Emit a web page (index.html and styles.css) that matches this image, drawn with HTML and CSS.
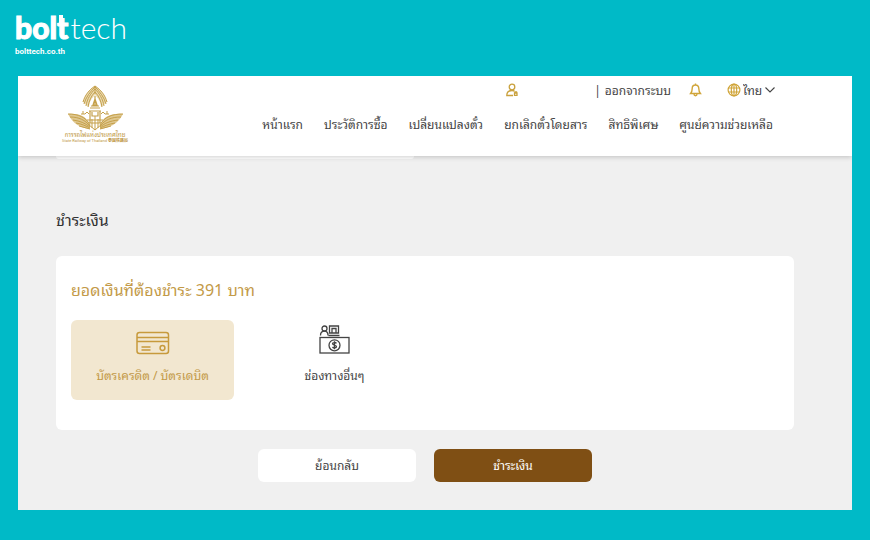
FILE: index.html
```html
<!DOCTYPE html>
<html lang="th">
<head>
<meta charset="utf-8">
<meta name="viewport" content="width=device-width, initial-scale=1">
<title>ชำระเงิน</title>
<link rel="stylesheet" href="styles.css">
</head>
<body>
<header class="brand">
  <div class="brand-name"><span class="brand-bold">bolt</span><span class="brand-light">tech</span></div>
  <a class="brand-url" href="#">bolttech.co.th</a>
</header>
<div class="window">
  <header class="site-header">
    <a class="srt-logo" href="#" aria-label="การรถไฟแห่งประเทศไทย">
      <svg class="srt-emblem" viewBox="0 0 57 46" fill="none" stroke="#c5a04a" stroke-width="1">
        <path d="M28 1C23 4 18 10 16 17l6 5c0-5 3-9 6-12 3 3 6 7 6 12l6-5C38 10 33 4 28 1z" fill="#eadbb5" stroke="none"/>
        <path d="M28 1C22 5 18 10 16 17M28 2C23 7 19 12 17 19M28 4C24 8 20 14 19 21M28 7c-4 4-6 9-7 15M28 1c6 4 10 9 12 16M28 2c5 5 9 10 11 17M28 4c4 4 8 10 9 17M28 7c4 4 6 9 7 15M28 1v8"/>
        <path d="M28 11v9M28 14l-2 6h4zM24 21h8M23 23h10M22 26h12M25 27v4h6v-4M23 26v12M33 26v12M20 35h16M19 38h18" stroke-width="1.200"/>
        <path d="M14 29h4l2-2 2 2M42 29h-4l-2-2-2 2M16 26v3M40 26v3M28 31v14M25 34v9M31 34v9M21 39l7 6 7-6"/>
        <path d="M1 29c10-1 18 2 21 9l1 6C14 43 6 39 1 29zM56 29c-10-1-19 2-22 9l-1 6c9-1 18-5 23-15z" fill="#dfc78f" stroke="none"/>
        <path d="M1 29c10 0 18 3 22 11M3 32c9 0 15 3 20 9M6 35c7 1 12 3 17 7M9 38c6 1 10 3 14 5M12 41l11 3M56 29c-11 0-19 3-23 11M54 32c-10 0-16 3-21 9M51 35c-8 1-13 3-18 7M48 38c-6 1-11 3-15 5M44 41l-11 3"/>
      </svg>
      <span class="srt-thai">การรถไฟแห่งประเทศไทย</span>
      <span class="srt-latin">State Railway of Thailand <b>泰国铁路局</b></span>
    </a>
    <div class="site-menus">
      <div class="account">
        <a class="user" href="#" aria-label="บัญชีผู้ใช้">
          <svg width="14" height="14" viewBox="0 0 14 14" fill="none" stroke="#c9a13d" stroke-width="1.300"><circle cx="7" cy="4" r="2.800"/><path d="M8 12.500H1.800C1.800 9.500 3.500 7.500 7 7.500c1 0 1.800.2 2.500.6"/><path d="M9.500 10h2.500v2.300H9.500zM10 10V8.800h1.500V10"/></svg>
        </a>
        <span class="divider">|</span>
        <a class="logout" href="#">ออกจากระบบ</a>
        <button class="bell" type="button" aria-label="การแจ้งเตือน">
          <svg width="13" height="14" viewBox="0 0 13 14" fill="none" stroke="#d0a53a" stroke-width="1.400"><path d="M6.500 2C4.300 2 3.200 3.700 3.200 5.500c0 3-.6 3.800-1.600 5h9.800c-1-1.200-1.600-2-1.600-5C9.800 3.700 8.700 2 6.500 2zM5 11c0 2.300 3 2.300 3 0M6.500.5V2"/></svg>
        </button>
        <label class="language">
          <svg width="14" height="14" viewBox="0 0 14 14" fill="none" stroke="#d0a53a" stroke-width="1.200"><circle cx="7" cy="7" r="5.900"/><ellipse cx="7" cy="7" rx="2.700" ry="5.900"/><path d="M7 1v12M1.500 5h11M1.500 9h11"/></svg>
          <select aria-label="ภาษา"><option>ไทย</option></select>
          <svg width="10" height="6" viewBox="0 0 10 6" fill="none" stroke="#444" stroke-width="1.100"><path d="M.5.500L5 5 9.500.500"/></svg>
        </label>
      </div>
      <nav class="nav">
        <a href="#">หน้าแรก</a>
        <a href="#">ประวัติการซื้อ</a>
        <a href="#">เปลี่ยนแปลงตั๋ว</a>
        <a href="#">ยกเลิกตั๋วโดยสาร</a>
        <a href="#">สิทธิพิเศษ</a>
        <a href="#">ศูนย์ความช่วยเหลือ</a>
      </nav>
    </div>
  </header>
  <main class="content">
    <div class="previous-card"></div>
    <h1>ชำระเงิน</h1>
    <section class="card">
      <h2>ยอดเงินที่ต้องชำระ 391 บาท</h2>
      <div class="methods">
        <button class="method selected" type="button" aria-pressed="true">
          <svg width="34" height="38" viewBox="0 -3 34 38" fill="none" stroke="#c79a3c" stroke-width="1.500"><rect x="1" y="5.500" width="31.500" height="21" rx="2.500"/><path d="M1 10.500h31M1 14.500h31M5.500 20h9M5.500 23h9"/><circle cx="26.500" cy="21" r="2.400"/></svg>
          <span>บัตรเครดิต / บัตรเดบิต</span>
        </button>
        <button class="method" type="button" aria-pressed="false">
          <svg width="32" height="38" viewBox="0 0 32 38" fill="none" stroke="#444" stroke-width="1.300"><rect x="1" y="13.500" width="29" height="15.500"/><circle cx="15.500" cy="21.300" r="5.500"/><path d="M17.500 19.300c-1-1.200-4-1-4 .5s4 1 4 2.800-3 1.700-4 .4M15.500 17.300v8"/><circle cx="5.500" cy="4.500" r="2.500"/><path d="M1.500 11.500c0-2.800 1.500-4.300 4-4.300S9 8.700 9 11.500M10.500 2h9v7h-9zM13 9V4.500h4V9M9.500 11.500h11"/></svg>
          <span>ช่องทางอื่นๆ</span>
        </button>
      </div>
    </section>
    <div class="actions">
      <button class="action" type="button">ย้อนกลับ</button>
      <button class="action primary" type="button">ชำระเงิน</button>
    </div>
  </main>
</div>
</body>
</html>
```
FILE: styles.css
```css
* { box-sizing: border-box; }

body {
  margin: 0;
  min-height: 100vh;
  display: flex;
  flex-direction: column;
  padding: 0 18px 30px;
  background: #00bac7;
  color: #444;
  font-family: "Noto Sans Thai Looped", "Noto Looped Thai", "Loma", "Waree", "Garuda", "Noto Serif Thai", "Noto Sans", sans-serif;
  font-size: 12px;
}

a { color: inherit; text-decoration: none; }
button, select { font: inherit; color: inherit; border: 0; padding: 0; background: none; }
h1, h2 { margin: 0; font-weight: 400; }
svg { display: block; flex: none; }

.brand { height: 76px; padding-top: 10px; margin-left: -3px; color: #fff; }
.brand-name { display: flex; gap: 2px; font-family: Lato, sans-serif; font-size: 30px; line-height: 34px; }
.brand-bold { position: relative; font-weight: 900; -webkit-text-stroke: 1px #fff; }
.brand-bold::after {
  content: "";
  position: absolute;
  right: 5px;
  top: 5px;
  width: 4px;
  height: 8px;
  background: #fff;
}
.brand-light { font-weight: 300; }
.brand-url { display: block; margin-top: 2px; font: 700 8px/12px Roboto, sans-serif; }

.window { flex: 1; background: #f0f0f0; }

.site-header {
  position: relative;
  display: flex;
  justify-content: space-between;
  height: 80px;
  padding: 0 79px 0 47px;
  background: #fff;
  box-shadow: 0 1px 5px rgba(0, 0, 0, .2);
  clip-path: inset(0 0 -8px);
}
.srt-logo { width: 60px; padding-top: 9px; display: flex; flex-direction: column; align-items: center; color: #bd963e; white-space: nowrap; }
.srt-emblem { width: 57px; height: 46px; }
.srt-thai { font-size: 6px; line-height: 7px; }
.srt-latin { font: 4px/5px Roboto, "Noto Sans CJK SC", sans-serif; }

.site-menus { display: flex; flex-direction: column; align-items: flex-end; }
.account { display: flex; align-items: center; height: 26px; padding-top: 1px; margin-right: -2px; }
.divider { margin-left: 75px; }
.logout { margin-left: 4px; }
.bell { margin-left: 18px; }
.language { display: flex; align-items: center; gap: 2px; margin-left: 25px; }
.language select { appearance: none; }
.nav { display: flex; gap: 21px; line-height: 20px; padding-top: 12px; white-space: nowrap; }

.content { padding: 0 58px 0 38px; }
.previous-card { width: 358px; max-width: 100%; height: 3px; background: #fff; border-radius: 0 0 3px 3px; }
h1 { margin-top: 46px; font-size: 16px; line-height: 28px; color: #333; }
.card { margin-top: 23px; padding: 18px 15px 30px; background: #fff; border-radius: 6px; }
h2 { font-size: 16px; line-height: 30px; color: #c39a48; }
.methods { display: flex; gap: 19px; margin-top: 16px; }
.method { width: 163px; height: 80px; display: flex; flex-direction: column; align-items: center; justify-content: flex-start; padding-top: 4px; gap: 3px; border-radius: 6px; line-height: 20px; }
.method.selected { background: #f2e7d0; color: #c39a48; }
.actions { display: flex; justify-content: center; gap: 18px; margin-top: 19px; }
.action { width: 158px; height: 33px; padding-bottom: 3px; border-radius: 6px; background: #fff; }
.action.primary { background: #7f4f14; color: #fff; }
```
